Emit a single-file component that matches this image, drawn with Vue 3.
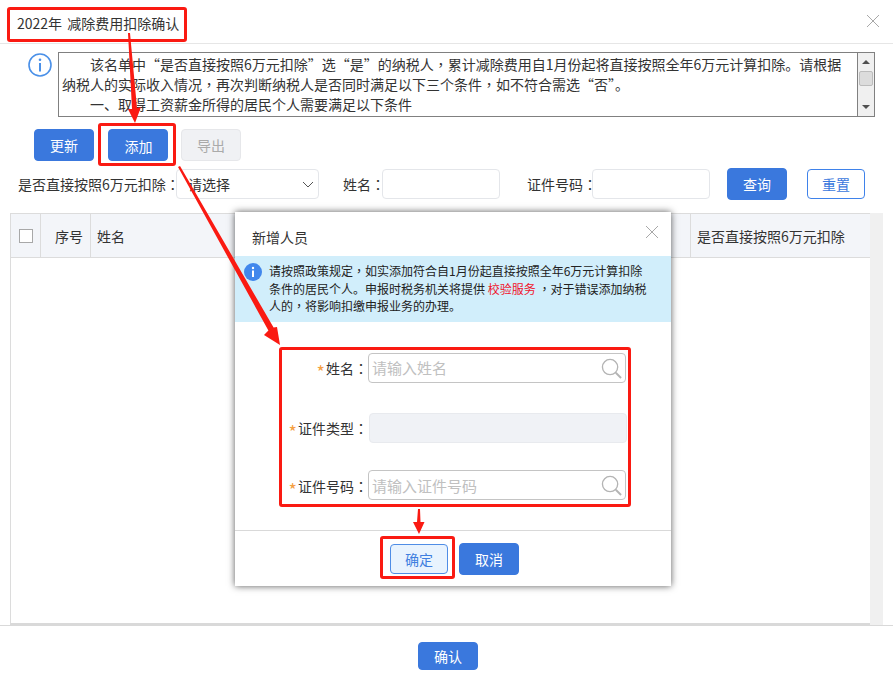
<script setup>
const formRows = [
  { label: '姓名', placeholder: '请输入姓名', search: true },
  { label: '证件类型', disabled: true },
  { label: '证件号码', placeholder: '请输入证件号码', search: true },
]
</script>

<template>
  <div class="page">
    <header class="head">
      <span class="title">2022年 减除费用扣除确认</span>
      <svg class="close main-close" viewBox="0 0 14 14"><path d="M1 1 13 13M13 1 1 13" /></svg>
    </header>

    <section class="notice">
      <svg class="info" viewBox="0 0 24 24">
        <circle cx="12" cy="12" r="11" fill="none" stroke="#4a90e8" stroke-width="1.6" />
        <circle cx="12" cy="6.8" r="1.3" fill="#4a90e8" />
        <rect x="11" y="10" width="2" height="8.5" fill="#4a90e8" />
      </svg>
      <div class="notice-box">
        <div class="notice-text">
          <p class="indent">该名单中“是否直接按照6万元扣除”选“是”的纳税人<span class="pc">，</span>累计减除费用自1月份起将直接按照全年6万元计算扣除。请根据</p>
          <p>纳税人的实际收入情况<span class="pc">，</span>再次判断纳税人是否同时满足以下三个条件<span class="pc">，</span>如不符合需选“否”。</p>
          <p class="indent">一、取得工资薪金所得的居民个人需要满足以下条件</p>
        </div>
        <div class="scrollbar">
          <i class="tri up"></i>
          <i class="thumb"></i>
          <i class="tri down"></i>
        </div>
      </div>
    </section>

    <section class="toolbar">
      <button class="btn primary">更新</button>
      <button class="btn primary add">添加</button>
      <button class="btn muted">导出</button>
    </section>

    <section class="filters">
      <label class="f-label first">是否直接按照6万元扣除<span class="pc">：</span></label>
      <div class="select">
        <span>请选择</span>
        <svg viewBox="0 0 12 7"><path d="M1 1 6 6 11 1" /></svg>
      </div>
      <label class="f-label name">姓名<span class="pc">：</span></label>
      <input class="f-input" />
      <label class="f-label idno">证件号码<span class="pc">：</span></label>
      <input class="f-input" />
      <button class="btn primary query">查询</button>
      <button class="btn outline">重置</button>
    </section>

    <section class="table-wrap">
      <div class="table">
        <div class="thead">
          <div class="cell check"><i></i></div>
          <div class="cell seq">序号</div>
          <div class="cell grow">姓名</div>
          <div class="cell last">是否直接按照6万元扣除</div>
        </div>
      </div>
      <div class="gutter"></div>
    </section>

    <footer class="foot">
      <button class="btn primary confirm">确认</button>
    </footer>

    <div class="modal">
      <div class="m-head">
        <span>新增人员</span>
        <svg class="close" viewBox="0 0 14 14"><path d="M1 1 13 13M13 1 1 13" /></svg>
      </div>
      <div class="m-banner">
        <svg viewBox="0 0 18 18">
          <circle cx="9" cy="9" r="9" fill="#4187ec" />
          <circle cx="9" cy="5" r="1.2" fill="#fff" />
          <rect x="8" y="7.5" width="2" height="6.5" fill="#fff" />
        </svg>
        <div class="m-banner-text">
          <p>请按照政策规定<span class="pc">，</span>如实添加符合自1月份起直接按照全年6万元计算扣除</p>
          <p>条件的居民个人。申报时税务机关将提供 <em>校验服务</em> <span class="pc">，</span>对于错误添加纳税</p>
          <p>人的<span class="pc">，</span>将影响扣缴申报业务的办理。</p>
        </div>
      </div>
      <div class="m-form">
        <div v-for="row in formRows" :key="row.label" class="m-row" :class="{ 'row-off': row.disabled }">
          <label><b>*</b>{{ row.label }}<span class="pc">：</span></label>
          <div v-if="row.disabled" class="m-disabled"></div>
          <div v-else class="m-input">
            <input :placeholder="row.placeholder" />
            <svg viewBox="0 0 22 22">
              <circle cx="9.5" cy="9.5" r="8" fill="none" stroke="#b4b4b4" stroke-width="1.4" />
              <path d="M15.5 15.5 21 21" stroke="#b4b4b4" stroke-width="2" fill="none" />
            </svg>
          </div>
        </div>
      </div>
      <div class="m-foot">
        <button class="btn ok">确定</button>
        <button class="btn primary cancel">取消</button>
      </div>
    </div>

    <div class="mark m1"></div>
    <div class="mark m2"></div>
    <div class="mark m3"></div>
    <div class="mark m4"></div>
    <svg class="arrows" viewBox="0 0 893 681">
      <polygon points="128,33 130,33 137,108 141,107 135,123 128,109 132,109" />
      <polygon points="178,167 180,166 273.6,327.5 277,327 280,345 264,335 268.4,330.5" />
      <polygon points="418,509 420,509 420.5,522 424.5,522 419,534 413,522 417,522" />
    </svg>
  </div>
</template>

<style>
html, body { margin: 0; background: #fff; }
</style>

<style scoped>
* { box-sizing: border-box; }
.page {
  position: relative;
  width: 893px;
  height: 681px;
  overflow: hidden;
  display: flex;
  flex-direction: column;
  background: #fff;
  color: #333;
  font: 14px/20px "Noto Sans CJK SC", "Noto Sans", sans-serif;
}
button, input { font: inherit; }
.pc { font-family: "Noto Sans CJK TC", "Noto Sans CJK SC", sans-serif; line-height: 1; }
.head {
  flex: none;
  height: 44px;
  padding: 0 13px 0 17px;
  display: flex;
  align-items: center;
  justify-content: space-between;
  border-bottom: 1px solid #e6e6e6;
}
.title { margin-top: 3px; word-spacing: 2px; }
.close { width: 14px; height: 14px; fill: none; stroke: #a8a8a8; stroke-width: 1; }
.main-close { margin-top: -2px; }
.notice {
  flex: none;
  display: flex;
  padding: 8px 18px 0 28px;
  gap: 6px;
}
.info { width: 24px; height: 24px; margin-top: 1px; flex: none; }
.notice-box {
  flex: 1;
  height: 65px;
  display: flex;
  border: 1px solid #808080;
  overflow: hidden;
}
.notice-text { flex: 1; padding: 1px 0 0 3px; overflow: hidden; }
.notice-text p { margin: 0; height: 20px; white-space: nowrap; }
.notice-text .indent { text-indent: 28px; }
.scrollbar {
  flex: none;
  width: 17px;
  border-left: 1px solid #808080;
  background: #f0f0f0;
  position: relative;
}
.scrollbar i { position: absolute; display: block; }
.thumb {
  left: 1px; top: 18px; width: 14px; height: 15px;
  background: #dcdcdc; border: 1px solid #bcbcbc; border-radius: 2px;
}
.tri { left: 4px; width: 0; height: 0; border-left: 4px solid transparent; border-right: 4px solid transparent; }
.tri.up { top: 7px; border-bottom: 4px solid #505050; }
.tri.down { bottom: 7px; border-top: 4px solid #505050; }

.toolbar {
  flex: none;
  display: flex;
  padding: 12px 0 0 34px;
}
.btn {
  width: 60px;
  height: 32px;
  padding: 0;
  border-radius: 4px;
  border: 1px solid #3a78dd;
  font-size: 14px;
  line-height: 20px;
}
.primary { background: #3a78dd; color: #fff; }
.muted { background: #f0f1f4; border-color: #e6e7ea; color: #aaa; margin-left: 13px; }
.add { margin-left: 14px; padding: 2px 0 0 1px; }
.filters {
  flex: none;
  height: 32px;
  margin-top: 7px;
  padding-left: 18px;
  display: flex;
  align-items: center;
}
.f-label { white-space: nowrap; }
.first { width: 158px; }
.name { margin-left: 24px; width: 39px; }
.idno { margin-left: 27px; width: 65px; }
.select, .f-input {
  height: 30px;
  border: 1px solid #e4e6ea;
  border-radius: 4px;
  background: #fff;
  outline: none;
}
.select {
  width: 143px;
  display: flex;
  align-items: center;
  justify-content: space-between;
  padding: 0 4px 0 11px;
}
.select svg { width: 12px; height: 7px; fill: none; stroke: #555; stroke-width: 1; }
.f-input { width: 118px; padding: 0 8px; }
.query { margin-left: 17px; }
.outline {
  margin-left: 20px;
  width: 58px;
  height: 30px;
  background: #fff;
  color: #3a78dd;
  border-color: #3f82ea;
}
.table-wrap {
  flex: 1;
  min-height: 0;
  margin-top: 13px;
  padding: 0 10px 0 10px;
  display: flex;
}
.table {
  flex: 1;
  border-left: 1px solid #dcdcdc;
  border-top: 1px solid #dcdcdc;
  border-bottom: 2px solid #d9d9d9;
}
.gutter { width: 13px; background: #f0f0f0; }
.thead {
  height: 44px;
  display: flex;
  background: #f3f5f9;
  border-bottom: 1px solid #dcdcdc;
}
.cell {
  display: flex;
  align-items: center;
  border-right: 1px solid #dcdcdc;
  padding-left: 6px;
}
.check { width: 30px; justify-content: center; padding: 0; }
.check i {
  display: block;
  width: 14px;
  height: 14px;
  border: 1px solid #a8a8a8;
  background: #fff;
}
.seq { width: 50px; justify-content: flex-end; padding: 0 7px 0 0; }
.grow { flex: 1; }
.last { width: 179px; border-right: 0; }
.foot {
  flex: none;
  height: 56px;
  border-top: 1px solid #d9d9d9;
  display: flex;
  justify-content: center;
  padding: 16px 0 0 3px;
}
.confirm { width: 60px; height: 28px; }

.modal {
  position: absolute;
  left: 235px;
  top: 212px;
  width: 436px;
  height: 374px;
  background: #fff;
  box-shadow: 0 0 7px rgba(0, 0, 0, 0.65);
  display: flex;
  flex-direction: column;
}
.m-head {
  height: 44px;
  flex: none;
  padding: 5px 12px 0 17px;
  display: flex;
  align-items: center;
  justify-content: space-between;
}
.m-head .close { margin-top: -10px; }
.m-banner {
  flex: none;
  height: 66px;
  background: #d1eefb;
  display: flex;
  padding: 6px 0 0 9px;
  gap: 7px;
  font-size: 12px;
  color: #222;
}
.m-banner svg { width: 18px; height: 18px; flex: none; margin-top: 1px; }
.m-banner-text p { margin: 0; height: 17.5px; line-height: 17.5px; white-space: nowrap; }
.m-banner em { font-style: normal; color: #f0142c; }
.m-form {
  flex: none;
  height: 209px;
  padding-top: 31px;
  display: flex;
  flex-direction: column;
  gap: 27px;
  border-bottom: 1px solid #d9d9d9;
}
.m-row { display: flex; height: 30px; align-items: center; }
.row-off { margin-top: 3px; }
.m-row label { width: 133px; text-align: right; flex: none; white-space: nowrap; }
.m-row:last-child label { padding-top: 2px; }
.m-row:last-child input { padding-top: 2px; }
.m-row b {
  color: #f5a042;
  font-weight: 400;
  font-size: 18px;
  line-height: 14px;
  vertical-align: -5px;
  margin-right: 1px;
}
.m-input {
  width: 258px;
  height: 100%;
  border: 1px solid #c4c4c4;
  border-radius: 4px;
  display: flex;
  align-items: center;
  padding: 0 3px 0 3px;
}
.m-input input {
  flex: 1;
  min-width: 0;
  border: 0;
  outline: none;
  padding: 0;
  font-size: 15px;
  color: #333;
  background: transparent;
}
.m-input input::placeholder { color: #c0c0c0; }
.m-input svg { width: 21px; height: 21px; flex: none; }
.m-disabled {
  width: 258px;
  height: 30px;
  margin-left: 1px;
  background: #f0f2f6;
  border: 1px solid #e8eaee;
  border-radius: 4px;
}
.m-foot {
  flex: 1;
  display: flex;
  align-items: center;
  justify-content: flex-start;
  padding: 0 0 0 155px;
  gap: 11px;
}
.ok {
  width: 58px;
  height: 30px;
  background: #e8f3fe;
  color: #3f7fe0;
  border-color: #4f8de6;
}
.mark {
  position: absolute;
  border: 3px solid #fa1a12;
  border-radius: 3px;
  pointer-events: none;
}
.m1 { left: 7px; top: 7px; width: 180px; height: 35px; }
.m2 { left: 98px; top: 123px; width: 78px; height: 43px; }
.m3 { left: 279px; top: 347px; width: 352px; height: 160px; }
.m4 { left: 380px; top: 536px; width: 75px; height: 43px; }
.arrows {
  position: absolute;
  left: 0;
  top: 0;
  width: 893px;
  height: 681px;
  fill: #fa1a12;
  pointer-events: none;
}
</style>
